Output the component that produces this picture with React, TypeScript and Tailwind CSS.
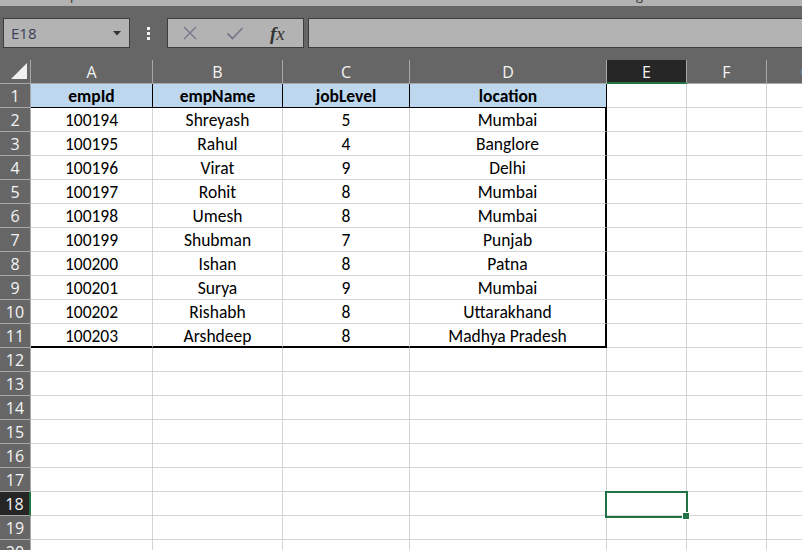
import React from "react";

const data: string[][] = [
  ["empId", "empName", "jobLevel", "location"],
  ["100194", "Shreyash", "5", "Mumbai"],
  ["100195", "Rahul", "4", "Banglore"],
  ["100196", "Virat", "9", "Delhi"],
  ["100197", "Rohit", "8", "Mumbai"],
  ["100198", "Umesh", "8", "Mumbai"],
  ["100199", "Shubman", "7", "Punjab"],
  ["100200", "Ishan", "8", "Patna"],
  ["100201", "Surya", "9", "Mumbai"],
  ["100202", "Rishabh", "8", "Uttarakhand"],
  ["100203", "Arshdeep", "8", "Madhya Pradesh"],
];

const cols = [
  { name: "A", w: "w-[122px]" },
  { name: "B", w: "w-[130px]" },
  { name: "C", w: "w-[127px]" },
  { name: "D", w: "w-[197px]" },
  { name: "E", w: "w-[80px]" },
  { name: "F", w: "w-[80px]" },
  { name: "G", w: "w-[80px]" },
];

const hdrFont = { fontFamily: '"Open Sans", "Noto Sans", sans-serif' };
const cellFont = { fontFamily: 'Carlito, Calibri, Lato, "Noto Sans", sans-serif' };

function cellClass(r: number, c: number): string {
  if (r === 1 && c <= 3) {
    return "bg-[#bdd7ee] border-r border-b border-r-black border-b-black font-bold";
  }
  if (r >= 2 && r <= 11 && c === 3) {
    if (r === 11) return "bg-white border-r-2 border-b-2 border-r-black border-b-black";
    return "bg-white border-r-2 border-b border-r-black border-b-[#d4d4d4]";
  }
  if (r === 11 && c <= 2) {
    return "bg-white border-r border-b-2 border-r-[#d4d4d4] border-b-black";
  }
  return "bg-white border-r border-b border-[#d4d4d4]";
}

function XIcon() {
  return (
    <svg width="16" height="16" viewBox="0 0 16 16">
      <path d="M2 2 L14 14 M14 2 L2 14" stroke="#77778a" strokeWidth="1.4" fill="none" />
    </svg>
  );
}

function CheckIcon() {
  return (
    <svg width="18" height="16" viewBox="0 0 18 16">
      <path d="M1.5 8.5 L6.5 13.5 L16.5 3" stroke="#77778a" strokeWidth="1.8" fill="none" />
    </svg>
  );
}

export default function App() {
  const rows = Array.from({ length: 21 }, (_, i) => i + 1);
  return (
    <div className="w-[802px] h-[550px] overflow-hidden bg-[#666666] relative" style={hdrFont}>
      {/* top strip */}
      <div className="h-[6px] bg-[#b2b2b2] relative overflow-hidden">
        <span className="absolute left-[70px] top-[-13px] text-[13px] leading-[16px] text-[#333]">p</span>
        <span className="absolute left-[636px] top-[-13px] text-[13px] leading-[16px] text-[#333]">g</span>
      </div>
      {/* formula bar */}
      <div className="h-[54px] pt-[12px] flex items-start">
        <div className="ml-[3px] shrink-0 w-[127px] h-[30px] bg-[#b3b3b3] border border-[#3d3d3d] flex items-center justify-between pl-[7px] pr-[8px]">
          <span className="text-[15px] text-[#3c3c58] leading-none">E18</span>
          <svg width="8" height="5" viewBox="0 0 8 5">
            <path d="M0 0 L8 0 L4 4.5 Z" fill="#333" />
          </svg>
        </div>
        <div className="w-[37px] shrink-0 h-[30px] flex flex-col items-center justify-center gap-[2px]">
          <div className="w-[3px] h-[3px] bg-[#f2f2f2]" />
          <div className="w-[3px] h-[3px] bg-[#f2f2f2]" />
          <div className="w-[3px] h-[3px] bg-[#f2f2f2]" />
        </div>
        <div className="w-[137px] shrink-0 h-[30px] bg-[#b3b3b3] border border-[#3d3d3d] flex items-center">
          <div className="ml-[14px]"><XIcon /></div>
          <div className="ml-[28px]"><CheckIcon /></div>
          <span
            className="ml-[26px] text-[19px] italic text-[#333] leading-none"
            style={{ fontFamily: '"Liberation Serif", "DejaVu Serif", serif' }}
          >
            <span className="font-bold">f</span>x
          </span>
        </div>
        <div className="ml-[4px] flex-1 h-[30px] bg-[#b3b3b3] border border-[#3d3d3d] border-r-0" />
      </div>
      {/* grid */}
      <div className="flex flex-col">
        <div className="flex h-[24px]">
          <div className="w-[31px] shrink-0 h-[24px] border-r border-b border-[#a8a8a8] relative">
            <svg className="absolute left-[10px] top-[2px]" width="18" height="18" viewBox="0 0 18 18">
              <path d="M17 1 L17 17 L1 17 Z" fill="#f0f0f0" />
            </svg>
          </div>
          {cols.map((c) =>
            c.name === "E" ? (
              <div
                key={c.name}
                className={`${c.w} shrink-0 h-[24px] pt-[1px] bg-[#262626] border-r border-[#a8a8a8] border-b-2 border-b-[#217346] flex items-center justify-center text-[16px] text-[#f4f4f4]`}
              >
                {c.name}
              </div>
            ) : (
              <div
                key={c.name}
                className={`${c.w} shrink-0 h-[24px] pt-[1px] border-r border-b border-[#a8a8a8] flex items-center justify-center text-[16px] text-[#f4f4f4]`}
              >
                {c.name}
              </div>
            )
          )}
        </div>
        {rows.map((r) => (
          <div key={r} className="flex h-[24px]">
            {r === 18 ? (
              <div className="w-[31px] shrink-0 h-[24px] pt-[1px] bg-[#262626] border-r-2 border-r-[#217346] border-b border-b-[#a8a8a8] flex items-center justify-center text-[16px] text-[#f4f4f4]">
                {r}
              </div>
            ) : (
              <div className="w-[31px] shrink-0 h-[24px] pt-[1px] border-r border-b border-[#a8a8a8] flex items-center justify-center text-[16px] text-[#f4f4f4]">
                {r}
              </div>
            )}
            {cols.map((c, ci) => (
              <div
                key={c.name}
                className={`${c.w} shrink-0 h-[24px] pt-[2px] ${cellClass(r, ci)} flex items-center justify-center text-[17.5px] text-black`}
                style={cellFont}
              >
                {r <= 11 && ci <= 3 ? data[r - 1][ci] : ""}
              </div>
            ))}
          </div>
        ))}
      </div>
      {/* selected cell E18 */}
      <div className="absolute left-[605px] top-[491px] w-[83px] h-[27px] border-2 border-[#217346] pointer-events-none" />
      <div className="absolute left-[682px] top-[512px] w-[8px] h-[8px] bg-white p-[1px]">
        <div className="w-full h-full bg-[#217346]" />
      </div>
    </div>
  );
}
